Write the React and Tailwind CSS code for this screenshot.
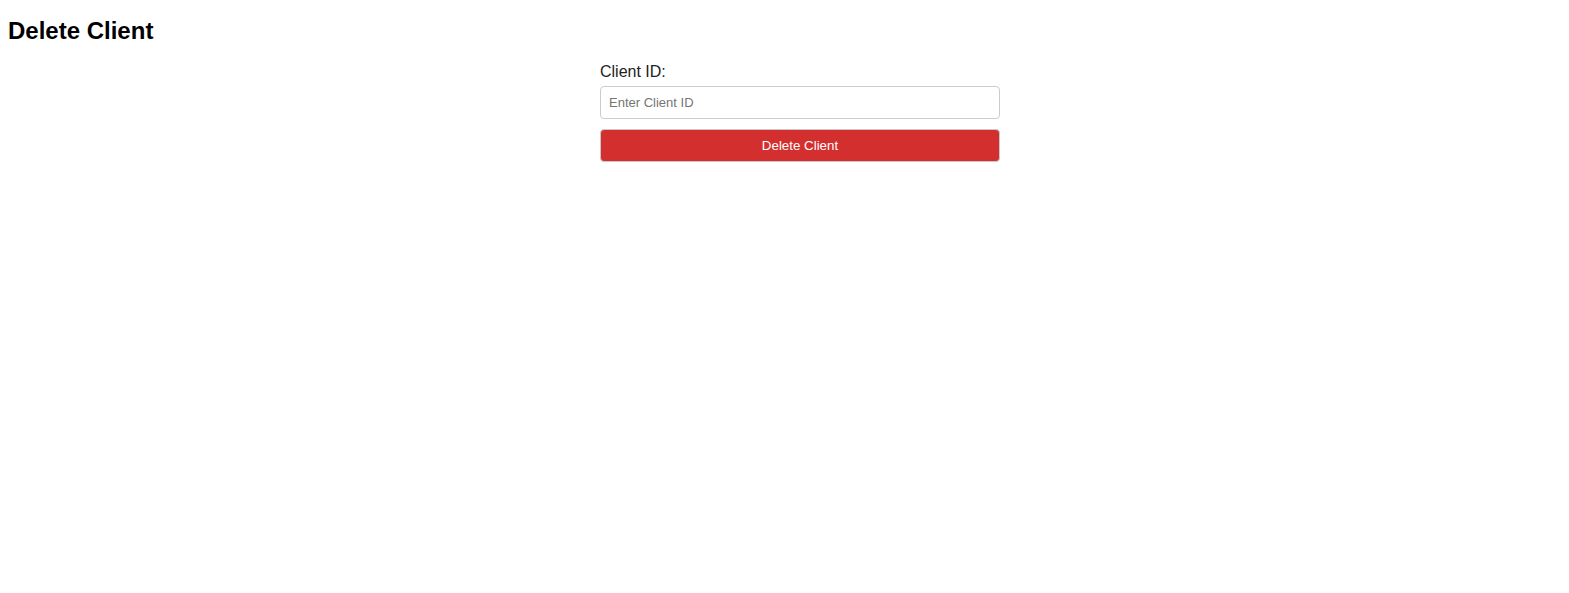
export default function App() {
  return (
    <div className="min-h-[593px] bg-white px-2 font-['Liberation_Sans',Arial,sans-serif] text-black">
      <h2 className="pt-[17px] text-[24px] font-bold leading-[28px]">Delete Client</h2>
      <div className="mt-[18px] ml-[592px] flex w-[400px] flex-col">
        <label className="mb-[5px] block text-[16px] leading-[18px] text-[#222]">Client ID:</label>
        <input
          type="text"
          placeholder="Enter Client ID"
          className="h-[33px] w-full rounded-[4px] border border-[#ccc] bg-white px-[8px] text-[13px] text-black outline-none placeholder:text-[#757575]"
        />
        <button className="mt-[10px] h-[33px] w-full rounded-[4px] border border-[#c8c8c8] bg-[#d32f2f] text-[13.33px] text-white">
          Delete Client
        </button>
      </div>
    </div>
  );
}
